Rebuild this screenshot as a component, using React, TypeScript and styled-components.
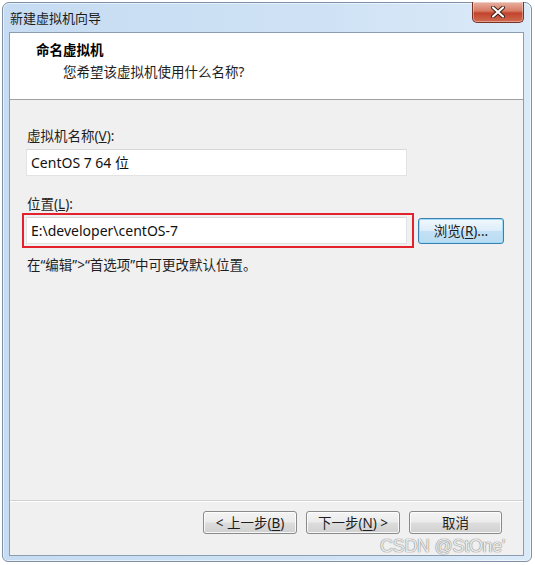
import styled, { createGlobalStyle } from 'styled-components';

const GlobalStyle = createGlobalStyle`
  html, body {
    margin: 0;
    padding: 0;
    background: #ffffff;
  }
  body {
    font-family: "Noto Sans", "Noto Sans CJK SC", sans-serif;
    color: #1e1e1e;
  }
`;

// white page around the captured window
const Page = styled.div`
  position: relative;
  padding: 2px;
  width: 535px;
  height: 565px;
  box-sizing: border-box;
`;

// aero-basic style window frame
const Window = styled.div`
  width: 530px;
  height: 560px;
  box-sizing: border-box;
  border: 1px solid #7f91a6;
  border-radius: 7px 7px 6px 6px;
  background: linear-gradient(90deg, #c6dcf2 0%, #cfe2f5 60%, #dbeaf8 100%);
  padding: 0 7px 5px 6px;
  display: flex;
  flex-direction: column;
  box-shadow: inset 0 0 0 1px rgba(255, 255, 255, 0.55);
`;

const TitleBar = styled.div`
  height: 29px;
  display: flex;
  align-items: center;
  justify-content: space-between;
`;

const Title = styled.span`
  font-size: 13px;
  line-height: 16px;
  margin-left: 1px;
  margin-top: 1px;
  color: #1b1b1b;
`;

const CloseButton = styled.div`
  align-self: flex-start;
  width: 52px;
  height: 21px;
  margin-top: -1px;
  margin-right: 0;
  box-sizing: border-box;
  border: 1px solid #7a3226;
  border-top: none;
  border-radius: 0 0 5px 5px;
  background: linear-gradient(180deg, #e8b2a4 0%, #d77a63 45%, #c2432c 55%, #d06b50 100%);
  box-shadow: inset 0 0 0 1px rgba(255, 255, 255, 0.35);
  display: flex;
  align-items: center;
  justify-content: center;
`;

// client area of the dialog
const Client = styled.div`
  flex: 1;
  border: 1px solid #8c9db2;
  background: #f0f0f0;
  display: flex;
  flex-direction: column;
`;

const Header = styled.div`
  height: 66px;
  background: #ffffff;
  border-bottom: 1px solid #a0a0a0;
  box-sizing: content-box;
  display: flex;
  flex-direction: column;
`;

const Heading = styled.div`
  font-size: 13.5px;
  font-weight: bold;
  line-height: 18px;
  margin: 8px 0 0 26px;
  color: #000;
`;

const SubTitle = styled.div`
  font-size: 13.5px;
  line-height: 18px;
  margin: 4px 0 0 53px;
  color: #1e1e1e;
`;

const Body = styled.div`
  flex: 1;
  padding: 27px 0 0 12px;
  display: flex;
  flex-direction: column;
`;

const Label = styled.div<{ $top: number }>`
  font-size: 13.5px;
  line-height: 18px;
  margin: ${(p) => p.$top}px 0 0 5px;
`;

const Row = styled.div`
  display: flex;
  align-items: center;
  gap: 4px;
`;

// annotation box drawn round a field
const Field = styled.div<{ $highlight?: boolean }>`
  border: 2px solid ${(p) => (p.$highlight ? '#e3222e' : 'transparent')};
  padding: 2px 5px 2px 2px;
  width: 381px;
`;

const Input = styled.div`
  height: 27px;
  box-sizing: border-box;
  background: #ffffff;
  border: 1px solid #e3e3e3;
  border-top-color: #d8d8d8;
  font-size: 14px;
  line-height: 25px;
  padding-left: 4px;
  color: #111;
`;

const Button = styled.div<{ $width: number; $primary?: boolean }>`
  width: ${(p) => p.$width}px;
  height: ${(p) => (p.$primary ? 26 : 23)}px;
  box-sizing: border-box;
  border: 1px solid ${(p) => (p.$primary ? '#3c7fb1' : '#8a8a8a')};
  border-radius: 3px;
  background: ${(p) =>
    p.$primary
      ? 'linear-gradient(180deg, #f1f8fd 0%, #dcedf9 48%, #c3e1f5 52%, #b9dcf3 100%)'
      : 'linear-gradient(180deg, #f4f4f4 0%, #ebebeb 48%, #dddddd 52%, #d0d0d0 100%)'};
  box-shadow: inset 0 0 0 1px ${(p) => (p.$primary ? '#9fdcf7' : 'rgba(255,255,255,0.8)')};
  display: flex;
  align-items: center;
  justify-content: center;
  font-size: 13.5px;
  line-height: 18px;
  color: #1e1e1e;
  u {
    text-decoration: underline;
    text-underline-offset: 2px;
  }
`;

const Hint = styled.div`
  font-size: 13.5px;
  line-height: 18px;
  margin: 8px 0 0 5px;
`;

const Footer = styled.div`
  height: 44px;
  border-top: 1px solid #d2d2d2;
  box-shadow: inset 0 1px 0 #ffffff;
  display: flex;
  justify-content: flex-end;
  align-items: flex-start;
  gap: 9px;
  padding: 10px 21px 0 0;
  box-sizing: content-box;
`;

const Watermark = styled.div`
  position: absolute;
  left: 380px;
  top: 535px;
  font-family: "Liberation Sans", Arial, sans-serif;
  font-size: 18px;
  line-height: 22px;
  color: rgba(255, 255, 255, 0.85);
  text-shadow: 0 0 1px #7a7a7a, 0 0 1px #7a7a7a;
  letter-spacing: -0.3px;
`;

function CloseGlyph() {
  return (
    <svg width="16" height="12" viewBox="0 0 16 12">
      <path d="M3 1.5 L13 10.5 M13 1.5 L3 10.5" stroke="#3b1a14" strokeWidth="4" strokeLinecap="round" />
      <path d="M3 1.5 L13 10.5 M13 1.5 L3 10.5" stroke="#ffffff" strokeWidth="2.2" strokeLinecap="round" />
    </svg>
  );
}

export default function App() {
  return (
    <Page>
      <GlobalStyle />
      <Window>
        <TitleBar>
          <Title>新建虚拟机向导</Title>
          <CloseButton>
            <CloseGlyph />
          </CloseButton>
        </TitleBar>
        <Client>
          <Header>
            <Heading>命名虚拟机</Heading>
            <SubTitle>您希望该虚拟机使用什么名称?</SubTitle>
          </Header>
          <Body>
            <Label $top={0}>
              虚拟机名称(<u>V</u>):
            </Label>
            <Row>
              <Field>
                <Input>CentOS 7 64 位</Input>
              </Field>
            </Row>
            <Label $top={15}>
              位置(<u>L</u>):
            </Label>
            <Row>
              <Field $highlight>
                <Input>E:\developer\centOS-7</Input>
              </Field>
              <Button $width={86} $primary>
                浏览(<u>R</u>)...
              </Button>
            </Row>
            <Hint>在“编辑”&gt;“首选项”中可更改默认位置。</Hint>
          </Body>
          <Footer>
            <Button $width={94}>
              &lt; 上一步(<u>B</u>)
            </Button>
            <Button $width={94}>
              下一步(<u>N</u>) &gt;
            </Button>
            <Button $width={93}>取消</Button>
          </Footer>
        </Client>
      </Window>
      <Watermark>CSDN @StOne'</Watermark>
    </Page>
  );
}
